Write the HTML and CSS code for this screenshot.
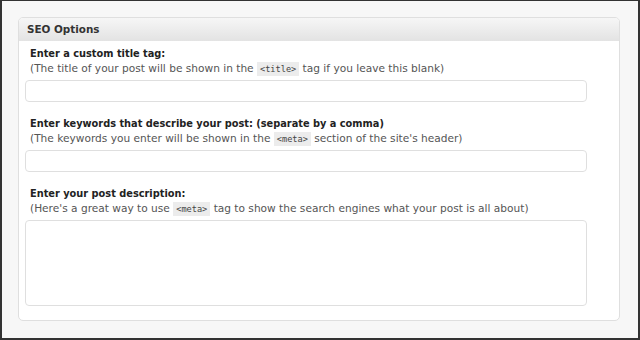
FILE: index.html
```html
<!DOCTYPE html>
<html lang="en">
<head>
  <meta charset="UTF-8" />
  <title>SEO Options</title>
  <link rel="stylesheet" href="styles.css">
</head>
<body>
  <div class="frame">
    <div class="postbox">
      <h3 class="hndle">SEO Options</h3>
      <div class="inside">
        <div class="field">
          <label for="seo-title">Enter a custom title tag:</label>
          <p class="hint">(The title of your post will be shown in the <code>&lt;title&gt;</code> tag if you leave this blank)</p>
          <input id="seo-title" type="text" />
        </div>
        <div class="field">
          <label for="seo-keywords">Enter keywords that describe your post: (separate by a comma)</label>
          <p class="hint">(The keywords you enter will be shown in the <code>&lt;meta&gt;</code> section of the site's header)</p>
          <input id="seo-keywords" type="text" />
        </div>
        <div class="field last">
          <label for="seo-desc">Enter your post description:</label>
          <p class="hint">(Here's a great way to use <code>&lt;meta&gt;</code> tag to show the search engines what your post is all about)</p>
          <textarea id="seo-desc"></textarea>
        </div>
      </div>
    </div>
  </div>
</body>
</html>
```

FILE: styles.css
```css
html, body {
  margin: 0;
  padding: 0;
}
body {
  font-family: "DejaVu Sans", Verdana, sans-serif;
  font-size: 10.6px;
  color: #333;
}
.frame {
  box-sizing: border-box;
  width: 640px;
  height: 340px;
  border: 2px solid #333;
  border-top-width: 1px;
  background: #f7f7f7;
  padding: 16px 18px 0 16px;
}
.postbox {
  background: #fff;
  border: 1px solid #dfdfdf;
  border-radius: 5px;
  overflow: hidden;
}
.hndle {
  margin: 0;
  height: 23px;
  line-height: 23px;
  padding: 0 8px;
  font-size: 10.4px;
  font-weight: bold;
  color: #333;
  background: linear-gradient(to bottom, #f6f6f6, #e3e3e3);
}
.inside {
  padding: 6px 33px 14px 6px;
}
.field {
  margin-bottom: 15px;
}
.field.last {
  margin-bottom: 0;
}
.field label {
  display: block;
  height: 14px;
  margin-left: 5px;
  line-height: 14px;
  font-size: 9.8px;
  font-weight: bold;
  color: #222;
}
.hint {
  height: 14px;
  margin: 0 0 5px 5px;
  line-height: 14px;
  color: #555;
}
.hint code {
  font-family: "DejaVu Sans Mono", monospace;
  font-size: 8.6px;
  line-height: 1;
  background: #ececec;
  padding: 2px 3px;
  color: #444;
}
.field input,
.field textarea {
  display: block;
  box-sizing: border-box;
  width: 562px;
  margin: 0;
  border: 1px solid #dfdfdf;
  border-radius: 4px;
  background: #fff;
  font-family: inherit;
  font-size: 11px;
}
.field input {
  height: 22px;
}
.field textarea {
  height: 86px;
  resize: none;
}
```
